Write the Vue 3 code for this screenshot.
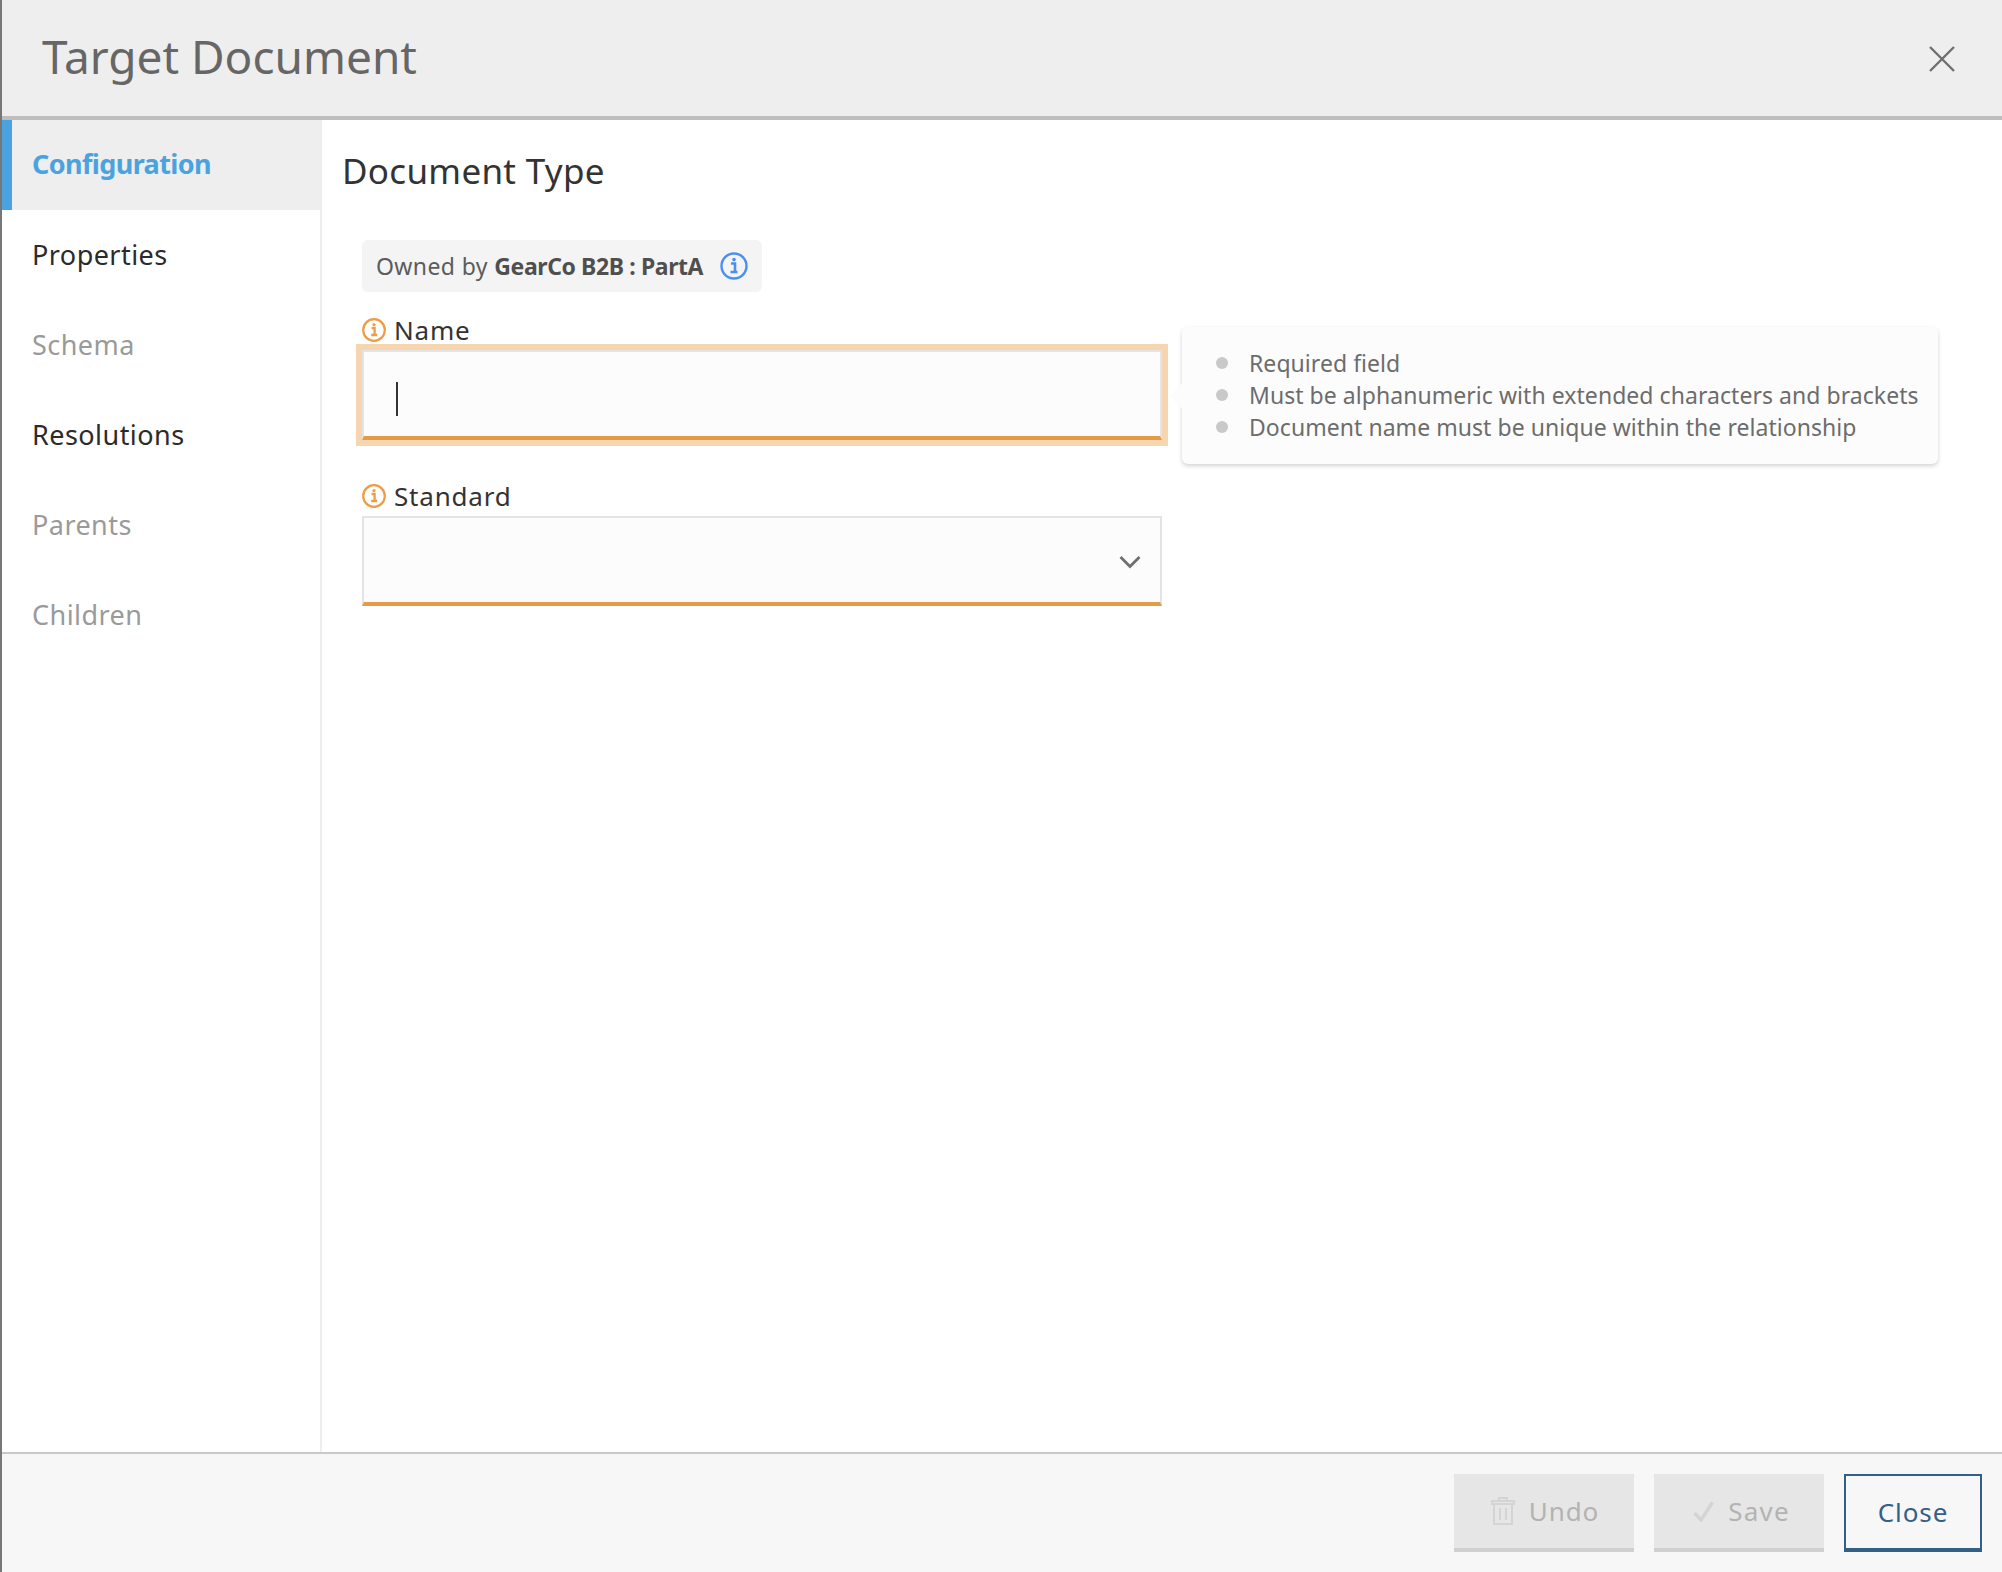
<template>
  <div class="dialog">
    <!-- header -->
    <div class="header">
      <div class="title">Target Document</div>
      <svg class="close-x" width="28" height="28" viewBox="0 0 28 28">
        <path d="M2 2 L26 26 M26 2 L2 26" stroke="#6f6f6f" stroke-width="2.4" fill="none" />
      </svg>
    </div>

    <div class="body">
      <!-- side nav -->
      <div class="sidebar">
        <div
          v-for="item in navItems"
          :key="item.label"
          class="nav-item"
          :class="item.state"
        >
          {{ item.label }}
        </div>
      </div>

      <!-- form -->
      <div class="content">
        <div class="heading">Document Type</div>

        <div class="form">
          <div class="owner">
            <span>Owned by <b>GearCo B2B : PartA</b></span>
            <svg class="owner-icon" width="28" height="28" viewBox="0 0 28 28">
              <circle cx="14" cy="14" r="12.5" fill="none" stroke="#4a90f0" stroke-width="2.4" />
              <path d="M11 11.5h4v8M10.5 20h7" fill="none" stroke="#4a90f0" stroke-width="2.6" />
              <circle cx="14" cy="7.6" r="1.8" fill="#4a90f0" />
            </svg>
          </div>

          <div class="label name-label">
            <svg width="24" height="24" viewBox="0 0 24 24">
              <circle cx="12" cy="12" r="10.8" fill="none" stroke="#ee9c46" stroke-width="2.2" />
              <path d="M9.6 10h3v6.6M9.2 17h6" fill="none" stroke="#ee9c46" stroke-width="2.3" />
              <circle cx="12" cy="6.6" r="1.6" fill="#ee9c46" />
            </svg>
            <span>Name</span>
          </div>
          <div class="field-wrap">
            <div class="field focused"><span class="caret"></span></div>
            <div class="tooltip">
              <div v-for="rule in rules" :key="rule" class="rule">
                <span class="dot"></span>{{ rule }}
              </div>
            </div>
          </div>

          <div class="label standard-label">
            <svg width="24" height="24" viewBox="0 0 24 24">
              <circle cx="12" cy="12" r="10.8" fill="none" stroke="#ee9c46" stroke-width="2.2" />
              <path d="M9.6 10h3v6.6M9.2 17h6" fill="none" stroke="#ee9c46" stroke-width="2.3" />
              <circle cx="12" cy="6.6" r="1.6" fill="#ee9c46" />
            </svg>
            <span>Standard</span>
          </div>
          <div class="field select">
            <svg class="chevron" width="22" height="14" viewBox="0 0 22 14">
              <path d="M1.5 2 L11 11.5 L20.5 2" fill="none" stroke="#6f6f6f" stroke-width="2.8" />
            </svg>
          </div>
        </div>
      </div>
    </div>

    <!-- footer -->
    <div class="footer">
      <button class="btn disabled undo">
        <svg width="24" height="28" viewBox="0 0 24 28">
          <path d="M8 3V1h8v2M1 4h22v3H1zM3 7v20h18V7M9 11v12M15 11v12" fill="none" stroke="#d4d4d4" stroke-width="2" />
        </svg>
        Undo
      </button>
      <button class="btn disabled save">
        <svg width="21" height="21" viewBox="0 0 21 21">
          <path d="M1.5 12 L8 19 L19.5 1.5" fill="none" stroke="#d4d4d4" stroke-width="3.4" />
        </svg>
        Save
      </button>
      <button class="btn close">Close</button>
    </div>
  </div>
</template>

<script setup>
const navItems = [
  { label: 'Configuration', state: 'active' },
  { label: 'Properties', state: '' },
  { label: 'Schema', state: 'muted' },
  { label: 'Resolutions', state: '' },
  { label: 'Parents', state: 'muted' },
  { label: 'Children', state: 'muted' }
]

const rules = [
  'Required field',
  'Must be alphanumeric with extended characters and brackets',
  'Document name must be unique within the relationship'
]
</script>

<style>
body {
  margin: 0;
}
</style>

<style scoped>
.dialog {
  display: flex;
  flex-direction: column;
  height: 1572px;
  box-sizing: border-box;
  border-left: 2px solid #777;
  background: #fff;
  font-family: "Noto Sans", "Open Sans", sans-serif;
  color: #2f2f2f;
}

/* header */
.header {
  height: 120px;
  box-sizing: border-box;
  flex-shrink: 0;
  display: flex;
  align-items: center;
  justify-content: space-between;
  padding: 0 46px 4px 40px;
  background: #eee;
  border-bottom: 4px solid #bdbdbd;
}

.title {
  font-size: 46px;
  color: #666;
}

.close-x {
  margin-top: 6px;
}

.body {
  flex: 1;
  display: flex;
  min-height: 0;
}

/* side nav */
.sidebar {
  width: 320px;
  box-sizing: border-box;
  flex-shrink: 0;
  border-right: 2px solid #eee;
}

.nav-item {
  height: 90px;
  box-sizing: border-box;
  display: flex;
  align-items: center;
  padding: 0 0 2px 30px;
  font-size: 27px;
  letter-spacing: 0.45px;
  color: #2b2b2b;
}

.nav-item.muted {
  color: #9a9a9a;
}

.nav-item.active {
  margin-right: -2px;
  padding: 0 0 3px 20px;
  border-left: 10px solid #4aa3df;
  background: #eee;
  color: #4aa3df;
  font-weight: 700;
  letter-spacing: -0.6px;
}

/* content */
.content {
  flex: 1;
  padding: 27px 20px 0;
}

.heading {
  font-size: 35px;
  letter-spacing: 0.3px;
  line-height: 48px;
  color: #333;
}

.form {
  width: 800px;
  padding-left: 20px;
  margin-top: 45px;
}

.owner {
  display: inline-flex;
  align-items: center;
  gap: 17px;
  height: 52px;
  box-sizing: border-box;
  padding: 0 14px;
  border-radius: 6px;
  background: #f4f4f4;
  font-size: 23px;
  letter-spacing: 0.4px;
  color: #5c5c5c;
  white-space: nowrap;
  vertical-align: top;
}

.owner b {
  color: #4f4f4f;
  letter-spacing: -0.4px;
}

.label {
  display: flex;
  align-items: center;
  gap: 8px;
  font-size: 26px;
  letter-spacing: 0.8px;
  color: #333;
}

.name-label {
  height: 32px;
  margin-top: 22px;
}

.standard-label {
  height: 32px;
  margin-top: 40px;
}

.field-wrap {
  position: relative;
  margin-top: 4px;
}

.field {
  height: 90px;
  box-sizing: border-box;
  border: 2px solid #e4e4e4;
  border-bottom: 4px solid #e59a45;
  background: #fcfcfc;
}

.field.focused {
  display: flex;
  align-items: center;
  padding-left: 32px;
  outline: 6px solid #f5d6b0;
}

.caret {
  width: 2px;
  height: 34px;
  margin-top: 10px;
  background: #333;
}

.field.select {
  display: flex;
  align-items: center;
  justify-content: flex-end;
  margin-top: 4px;
  padding: 0 19px 0 0;
}

.chevron {
  margin-top: 4px;
}

/* tooltip */
.tooltip {
  position: absolute;
  left: 820px;
  top: -23px;
  width: 756px;
  height: 137px;
  box-sizing: border-box;
  padding: 20px 0 0 34px;
  border-radius: 6px;
  background: #fcfcfc;
  box-shadow: 0 2px 4px rgba(0, 0, 0, 0.18);
  font-size: 23px;
  letter-spacing: 0.05px;
  color: #6c6c6c;
  white-space: nowrap;
}

.tooltip::before {
  content: "";
  position: absolute;
  left: -12px;
  top: 56px;
  border-style: solid;
  border-width: 13px 12px 13px 0;
  border-color: transparent #fcfcfc transparent transparent;
}

.rule {
  display: flex;
  align-items: center;
  height: 32px;
}

.dot {
  width: 12px;
  height: 12px;
  margin-right: 21px;
  border-radius: 50%;
  background: #c9c9c9;
}

/* footer */
.footer {
  height: 120px;
  box-sizing: border-box;
  flex-shrink: 0;
  display: flex;
  justify-content: flex-end;
  gap: 20px;
  padding: 20px 20px 0 0;
  border-top: 2px solid #c8c8c8;
  background: #f7f7f7;
}

.btn {
  display: flex;
  align-items: center;
  justify-content: center;
  gap: 14px;
  height: 78px;
  box-sizing: border-box;
  padding: 0;
  font-family: inherit;
  font-size: 26px;
  letter-spacing: 0.9px;
  border-radius: 0;
}

.btn.disabled {
  border: none;
  border-bottom: 4px solid #d0d0d0;
  background: #e6e6e6;
  color: #b3b3b3;
}

.btn.undo {
  width: 180px;
  padding-left: 2px;
}

.btn.save {
  width: 170px;
  padding-left: 5px;
  letter-spacing: 1.2px;
}

.btn.close {
  width: 138px;
  border: 2px solid #336088;
  border-bottom-width: 4px;
  background: #f7f7f7;
  color: #336088;
}
</style>
